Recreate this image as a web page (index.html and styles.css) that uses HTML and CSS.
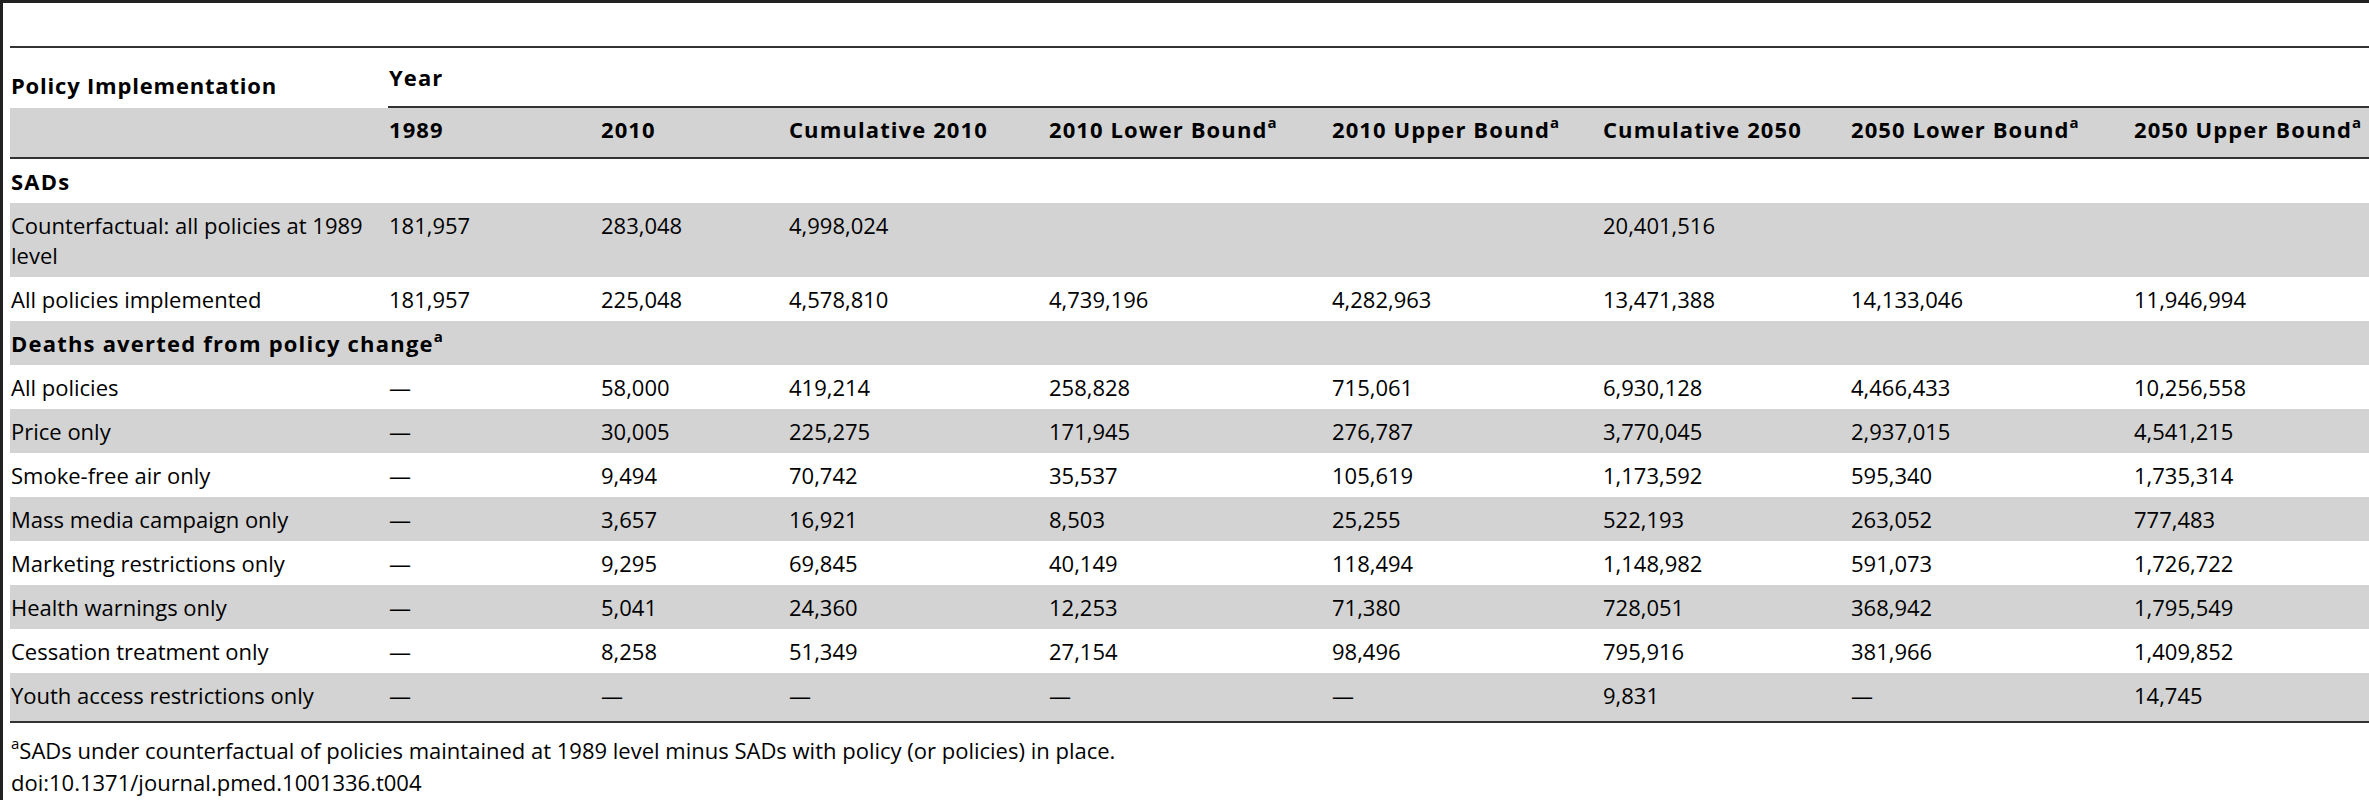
FILE: index.html
```html
<!DOCTYPE html>
<html lang="en">
  <head>
    <meta charset="UTF-8" />
    <meta name="viewport" content="width=device-width, initial-scale=1.0" />
    <title>Table 4</title>
    <link rel="stylesheet" href="styles.css">
  </head>

  <body>
    <div class="frame">
      <table class="dataTable">
        <colgroup>
          <col class="colPolicy" />
          <col class="col1989" />
          <col class="col2010" />
          <col class="colCum2010" />
          <col class="colLow2010" />
          <col class="colUp2010" />
          <col class="colCum2050" />
          <col class="colLow2050" />
          <col class="colUp2050" />
        </colgroup>
        <thead>
          <tr class="headTop">
            <th class="policyHead">Policy Implementation</th>
            <th class="yearHead" colspan="8">Year</th>
          </tr>
          <tr class="headYears">
            <th></th>
            <th>1989</th>
            <th>2010</th>
            <th>Cumulative 2010</th>
            <th>2010 Lower Bound<sup>a</sup></th>
            <th>2010 Upper Bound<sup>a</sup></th>
            <th>Cumulative 2050</th>
            <th>2050 Lower Bound<sup>a</sup></th>
            <th>2050 Upper Bound<sup>a</sup></th>
          </tr>
        </thead>
        <tbody>
          <tr class="section">
            <td colspan="9">SADs</td>
          </tr>
          <tr>
            <td>Counterfactual: all policies at 1989 level</td>
            <td>181,957</td>
            <td>283,048</td>
            <td>4,998,024</td>
            <td></td>
            <td></td>
            <td>20,401,516</td>
            <td></td>
            <td></td>
          </tr>
          <tr>
            <td>All policies implemented</td>
            <td>181,957</td>
            <td>225,048</td>
            <td>4,578,810</td>
            <td>4,739,196</td>
            <td>4,282,963</td>
            <td>13,471,388</td>
            <td>14,133,046</td>
            <td>11,946,994</td>
          </tr>
          <tr class="section">
            <td colspan="9">Deaths averted from policy change<sup>a</sup></td>
          </tr>
          <tr>
            <td>All policies</td>
            <td>—</td>
            <td>58,000</td>
            <td>419,214</td>
            <td>258,828</td>
            <td>715,061</td>
            <td>6,930,128</td>
            <td>4,466,433</td>
            <td>10,256,558</td>
          </tr>
          <tr>
            <td>Price only</td>
            <td>—</td>
            <td>30,005</td>
            <td>225,275</td>
            <td>171,945</td>
            <td>276,787</td>
            <td>3,770,045</td>
            <td>2,937,015</td>
            <td>4,541,215</td>
          </tr>
          <tr>
            <td>Smoke-free air only</td>
            <td>—</td>
            <td>9,494</td>
            <td>70,742</td>
            <td>35,537</td>
            <td>105,619</td>
            <td>1,173,592</td>
            <td>595,340</td>
            <td>1,735,314</td>
          </tr>
          <tr>
            <td>Mass media campaign only</td>
            <td>—</td>
            <td>3,657</td>
            <td>16,921</td>
            <td>8,503</td>
            <td>25,255</td>
            <td>522,193</td>
            <td>263,052</td>
            <td>777,483</td>
          </tr>
          <tr>
            <td>Marketing restrictions only</td>
            <td>—</td>
            <td>9,295</td>
            <td>69,845</td>
            <td>40,149</td>
            <td>118,494</td>
            <td>1,148,982</td>
            <td>591,073</td>
            <td>1,726,722</td>
          </tr>
          <tr>
            <td>Health warnings only</td>
            <td>—</td>
            <td>5,041</td>
            <td>24,360</td>
            <td>12,253</td>
            <td>71,380</td>
            <td>728,051</td>
            <td>368,942</td>
            <td>1,795,549</td>
          </tr>
          <tr>
            <td>Cessation treatment only</td>
            <td>—</td>
            <td>8,258</td>
            <td>51,349</td>
            <td>27,154</td>
            <td>98,496</td>
            <td>795,916</td>
            <td>381,966</td>
            <td>1,409,852</td>
          </tr>
          <tr class="lastRow">
            <td>Youth access restrictions only</td>
            <td>—</td>
            <td>—</td>
            <td>—</td>
            <td>—</td>
            <td>—</td>
            <td>9,831</td>
            <td>—</td>
            <td>14,745</td>
          </tr>
        </tbody>
      </table>

      <!-- 表注 -->
      <div class="footnotes">
        <p><sup>a</sup>SADs under counterfactual of policies maintained at 1989 level minus SADs with policy (or policies) in place.</p>
        <p>doi:10.1371/journal.pmed.1001336.t004</p>
      </div>
    </div>
  </body>
</html>
```

FILE: styles.css
```css
html,
body {
  overflow: hidden;
}

body {
  margin: 0;
  padding: 0;
  background: #fff;
  color: #000;
  font-family: "Open Sans", "Liberation Sans", sans-serif;
  font-size: 22px;
}

.frame {
  box-sizing: border-box;
  width: 2369px;
  height: 800px;
  padding: 43px 0 0 7px;
  border-top: 3px solid #222;
  border-left: 3px solid #222;
}

.dataTable {
  width: 2359px;
  table-layout: fixed;
  border-collapse: separate;
  border-spacing: 0;
  border-top: 2px solid #333;
}

.colPolicy {
  width: 378px;
}

.col1989 {
  width: 212px;
}

.col2010 {
  width: 188px;
}

.colCum2010 {
  width: 260px;
}

.colLow2010 {
  width: 283px;
}

.colUp2010 {
  width: 271px;
}

.colCum2050 {
  width: 248px;
}

.colLow2050 {
  width: 283px;
}

.colUp2050 {
  width: 236px;
}

.dataTable th,
.dataTable td {
  padding: 7px 10px 7px 1px;
  line-height: 30px;
  text-align: left;
  vertical-align: top;
  white-space: normal;
}

.dataTable th {
  font-weight: 700;
  letter-spacing: 1.1px;
  white-space: nowrap;
}

.headTop .policyHead {
  padding-top: 22px;
  padding-bottom: 0;
  letter-spacing: 0.8px;
}

.headTop .yearHead {
  padding-top: 14px;
  padding-bottom: 14px;
  border-bottom: 2px solid #333;
}

.headYears th {
  padding-top: 6px;
  padding-bottom: 13px;
  background: #d3d3d3;
  border-bottom: 2px solid #333;
}

.dataTable tbody tr:nth-child(even) td {
  background: #d3d3d3;
}

.section td {
  font-weight: 700;
  letter-spacing: 1.2px;
}

.lastRow td {
  padding-bottom: 11px;
  border-bottom: 2px solid #333;
}

sup {
  font-size: 15px;
  line-height: 0;
  letter-spacing: 0;
  vertical-align: 10px;
}

.footnotes {
  margin-top: 11px;
  padding-left: 1px;
}

.footnotes p {
  margin: 0;
  line-height: 32px;
}
```
